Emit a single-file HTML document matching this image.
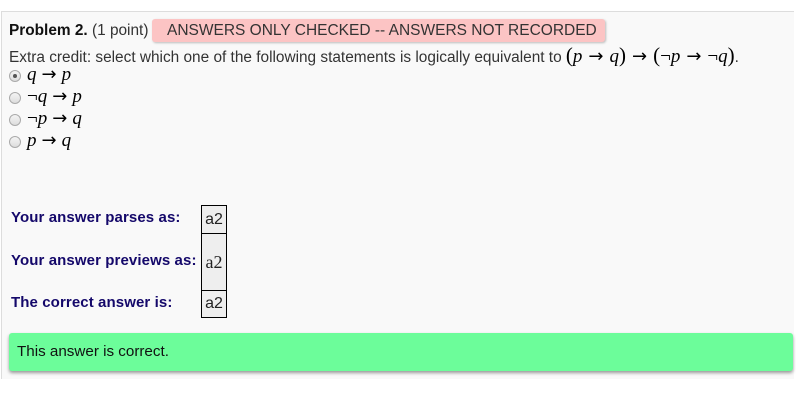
<!DOCTYPE html>
<html><head><style>
body{margin:0;width:796px;height:408px;background:#fff;font-family:"Liberation Sans",sans-serif;font-size:15.4px;color:#333;position:relative;overflow:hidden}
.box{position:absolute;left:1px;top:11px;width:792px;height:367px;background:#f9f9f9;border-top:1px solid #ddd;border-left:1px solid #ddd}
.a{position:absolute;white-space:nowrap}
.badge{position:absolute;left:152px;top:19px;width:453px;height:23px;background:#fcc4c4;border-radius:3px;box-shadow:1px 1px 2px #bbb;font-size:15.5px;color:#333;line-height:23px;padding-left:15px;box-sizing:border-box}
.m{font-family:"Liberation Serif",serif;font-style:italic;font-size:19px;color:#000}
.ar{font-style:normal;font-family:"DejaVu Sans",sans-serif;font-size:18px;margin:0 5px}
.e .ar{margin:0 6px}
.p{font-style:normal;font-size:21px}
.r{position:absolute;left:9px;width:12px;height:12px;border:1px solid #aaa;border-radius:50%;background:linear-gradient(#f4f4f4,#ddd);box-sizing:border-box}
.lbl{position:absolute;left:11px;font-weight:bold;color:#14086a;font-size:15px;letter-spacing:.1px}
.cell{position:absolute;left:201px;width:26px;border:1px solid #000;background:#eee;box-sizing:border-box;text-align:center;font-size:16px;color:#222}
.green{position:absolute;left:9px;top:333px;width:784px;height:38px;background:#6cfd9a;border-radius:3px;box-shadow:0 2px 3px #999;font-size:15.2px;line-height:38px;padding-left:8px;box-sizing:border-box;color:#111}
</style></head><body>
<div class="box"></div>
<div class="a" style="left:9px;top:22px"><b style="color:#111">Problem 2.</b> (1 point)</div>
<div class="badge">ANSWERS ONLY CHECKED -- ANSWERS NOT RECORDED</div>
<div class="a" style="left:9px;top:43px">Extra credit: select which one of the following statements is logically equivalent to <span class="m e" style="font-style:normal"><span class="p">(</span><i>p</i><span class="ar">→</span><i>q</i><span class="p">)</span><span class="ar">→</span><span class="p">(</span>¬<i>p</i><span class="ar">→</span>¬<i>q</i><span class="p">)</span></span>.</div>
<div class="r" style="top:70px"><div style="position:absolute;left:3px;top:3px;width:4px;height:4px;border-radius:50%;background:#555"></div></div>
<div class="a m" style="left:27px;top:64px"><i>q</i><span class="ar">→</span><i>p</i></div>
<div class="r" style="top:92px"></div>
<div class="a m" style="left:27px;top:86px"><span style="font-style:normal">¬</span><i>q</i><span class="ar">→</span><i>p</i></div>
<div class="r" style="top:114px"></div>
<div class="a m" style="left:27px;top:108px"><span style="font-style:normal">¬</span><i>p</i><span class="ar">→</span><i>q</i></div>
<div class="r" style="top:136px"></div>
<div class="a m" style="left:27px;top:130px"><i>p</i><span class="ar">→</span><i>q</i></div>
<div class="lbl" style="top:209px">Your answer parses as:</div>
<div class="lbl" style="top:252px">Your answer previews as:</div>
<div class="lbl" style="top:294px">The correct answer is:</div>
<div class="cell" style="top:205px;height:29px;line-height:27px">a2</div>
<div class="cell" style="top:233px;height:58px;line-height:56px;font-family:'Liberation Serif',serif;font-size:18px">a2</div>
<div class="cell" style="top:290px;height:28px;line-height:26px">a2</div>
<div class="green">This answer is correct.</div>
</body></html>
